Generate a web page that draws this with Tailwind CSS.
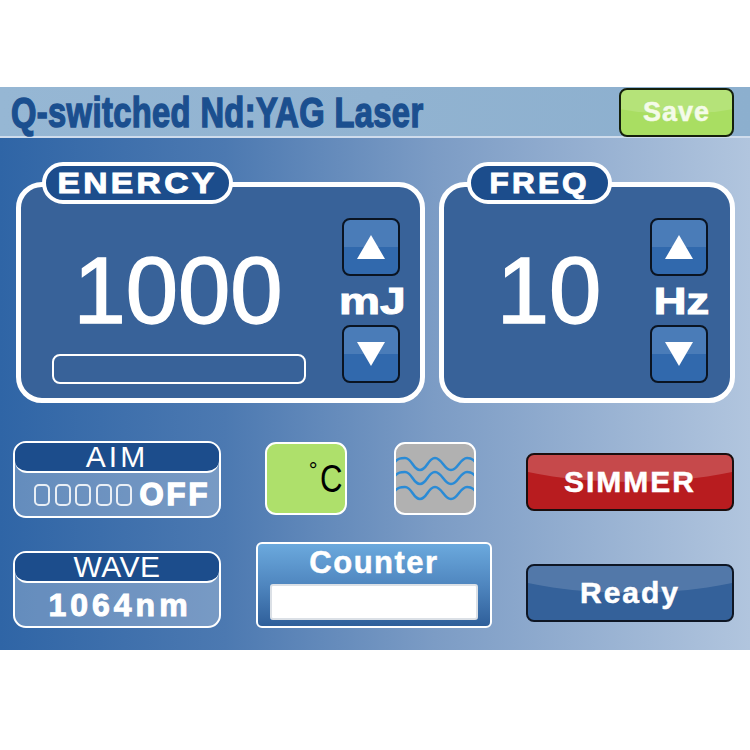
<!DOCTYPE html>
<html lang="en">
<head>
<meta charset="UTF-8">
<title>Q-switched Nd:YAG Laser</title>
<script src="https://cdn.jsdelivr.net/npm/@tailwindcss/browser@4"></script>
</head>
<body class="bg-white font-['Liberation_Sans',Arial,sans-serif] text-white">
<div class="w-[750px] h-[750px] pt-[87px] overflow-hidden">
  <div class="h-[563px] bg-[linear-gradient(to_right,#2f65a6_0%,#4c79b1_30%,#7c9cc5_58%,#b1c5de_100%)]">

    <!-- header -->
    <div class="h-[51px] flex justify-between items-start pl-[11px] pr-[16px] border-b-2 border-[#cfdcec] bg-[linear-gradient(to_right,#96b7d4,#8cafce)]">
      <h1 class="w-[412px] mt-[2px] text-[43px] leading-[46px] font-bold tracking-[0.5px] whitespace-nowrap text-[#1b4f8f] origin-left scale-x-[0.76] [-webkit-text-stroke:1.5px_#1b4f8f]">Q-switched Nd:YAG Laser</h1>
      <button class="relative w-[115px] h-[49px] mt-[1px] flex items-center justify-center overflow-hidden rounded-lg border-2 border-[#15200c] bg-[#a9de62] text-[27px] leading-none font-bold tracking-[1px] text-[#f4fbe9] [-webkit-text-stroke:0.5px_#f4fbe9]">
        <span class="absolute -left-[100px] -right-[100px] -top-[122px] h-[146px] rounded-[50%] bg-white/15"></span>
        <span class="relative">Save</span>
      </button>
    </div>

    <!-- energy / freq -->
    <div class="flex gap-[14px] pl-[16px] pt-[44px]">
      <section class="relative w-[409px] h-[221px] flex rounded-[26px] border-[5px] border-white bg-[#386299]">
        <div class="absolute left-[21px] top-[-25px] w-[191px] h-[42px] flex items-center justify-center rounded-full border-4 border-white bg-[#1c4d8c] text-[30px] leading-none font-bold">
          <span class="tracking-[3px] scale-x-[1.12] [-webkit-text-stroke:1px_#fff]">ENERCY</span>
        </div>
        <div class="ml-[31px] w-[254px]">
          <div class="mt-[56px] pr-[2px] text-center text-[94px] leading-[95px] [-webkit-text-stroke:1.5px_#fff]">1000</div>
          <div class="mt-[16px] h-[30px] rounded-lg border-2 border-white"></div>
        </div>
        <div class="ml-[36px] w-[58px] pt-[31px] flex flex-col items-center">
          <button class="w-[58px] h-[58px] flex items-center justify-center rounded-lg border-2 border-[#0a1422] bg-[linear-gradient(#4a7cb8_0%,#4a7cb8_50%,#3169ad_50%,#3169ad_100%)]">
            <svg width="28" height="24" viewBox="0 0 28 24"><path d="M14 0 L28 24 L0 24 Z" fill="#fff"/></svg>
          </button>
          <div class="h-[49px] pt-[2px] pl-[2px] flex items-center justify-center text-[36px] leading-none font-bold whitespace-nowrap scale-x-[1.28] [-webkit-text-stroke:1px_#fff]">mJ</div>
          <button class="w-[58px] h-[58px] flex items-center justify-center rounded-lg border-2 border-[#0a1422] bg-[linear-gradient(#4a7cb8_0%,#4a7cb8_50%,#3169ad_50%,#3169ad_100%)]">
            <svg width="28" height="24" viewBox="0 0 28 24"><path d="M0 0 L28 0 L14 24 Z" fill="#fff"/></svg>
          </button>
        </div>
      </section>

      <section class="relative w-[296px] h-[221px] flex rounded-[26px] border-[5px] border-white bg-[#386299]">
        <div class="absolute left-[23px] top-[-25px] w-[145px] h-[42px] flex items-center justify-center rounded-full border-4 border-white bg-[#1c4d8c] text-[30px] leading-none font-bold">
          <span class="tracking-[3px] scale-x-[1.05] [-webkit-text-stroke:1px_#fff]">FREQ</span>
        </div>
        <div class="w-[206px]">
          <div class="mt-[56px] text-center text-[94px] leading-[95px] pl-[4px] [-webkit-text-stroke:1.5px_#fff]">10</div>
        </div>
        <div class="w-[58px] pt-[31px] flex flex-col items-center">
          <button class="w-[58px] h-[58px] flex items-center justify-center rounded-lg border-2 border-[#0a1422] bg-[linear-gradient(#4a7cb8_0%,#4a7cb8_50%,#3169ad_50%,#3169ad_100%)]">
            <svg width="28" height="24" viewBox="0 0 28 24"><path d="M14 0 L28 24 L0 24 Z" fill="#fff"/></svg>
          </button>
          <div class="h-[49px] pt-[2px] pl-[3px] flex items-center justify-center text-[36px] leading-none font-bold whitespace-nowrap scale-x-[1.26] [-webkit-text-stroke:1px_#fff]">Hz</div>
          <button class="w-[58px] h-[58px] flex items-center justify-center rounded-lg border-2 border-[#0a1422] bg-[linear-gradient(#4a7cb8_0%,#4a7cb8_50%,#3169ad_50%,#3169ad_100%)]">
            <svg width="28" height="24" viewBox="0 0 28 24"><path d="M0 0 L28 0 L14 24 Z" fill="#fff"/></svg>
          </button>
        </div>
      </section>
    </div>

    <!-- lower controls -->
    <div class="flex pt-[38px] pl-[13px]">
      <div class="w-[208px] flex flex-col gap-[33px]">
        <div class="h-[77px] flex flex-col rounded-[13px] border-2 border-white bg-white/25 overflow-hidden">
          <div class="h-[28px] shrink-0 flex items-center justify-center rounded-b-[12px] bg-[#1c4d8c] border-b-2 border-white text-[30px] leading-none tracking-[3px] box-content">AIM</div>
          <div class="flex-1 flex items-center pl-[19px] gap-[4.5px]">
            <span class="w-[16px] h-[22px] rounded-[5px] border-2 border-white/85"></span>
            <span class="w-[16px] h-[22px] rounded-[5px] border-2 border-white/85"></span>
            <span class="w-[16px] h-[22px] rounded-[5px] border-2 border-white/85"></span>
            <span class="w-[16px] h-[22px] rounded-[5px] border-2 border-white/85"></span>
            <span class="w-[16px] h-[22px] rounded-[5px] border-2 border-white/85"></span>
            <span class="ml-[3px] text-[31px] leading-none font-bold tracking-[3px] [-webkit-text-stroke:1.5px_#fff]">OFF</span>
          </div>
        </div>
        <div class="h-[77px] flex flex-col rounded-[13px] border-2 border-white bg-white/25 overflow-hidden">
          <div class="h-[28px] shrink-0 flex items-center justify-center rounded-b-[12px] bg-[#1c4d8c] border-b-2 border-white text-[30px] leading-none tracking-[0.5px] box-content">WAVE</div>
          <div class="flex-1 pl-[6px] flex items-center justify-center text-[32px] leading-none font-bold tracking-[4px] [-webkit-text-stroke:1px_#fff]">1064nm</div>
        </div>
      </div>

      <div class="ml-[35px] w-[236px] pt-[1px]">
        <div class="flex gap-[47px] pl-[9px]">
          <div class="w-[82px] h-[73px] flex justify-end items-center pr-[3px] rounded-[11px] border-2 border-white bg-[#aee06b] text-black text-[38px] leading-none">
            <span class="self-start mt-[16px] -mr-[3px] text-[22px] leading-none">°</span><span class="origin-right scale-x-[0.82]">C</span>
          </div>
          <div class="w-[82px] h-[73px] rounded-[11px] border-2 border-white bg-[#b1b1b1] overflow-hidden">
            <svg class="-m-[2px]" width="82" height="73" viewBox="0 0 82 73" fill="none" stroke="#2a8bd6" stroke-width="2.5">
              <path d="M0 21 C4 16 7 16 11 16 C18 16 19 28 26 28 C33 28 34 16 41 16 C48 16 50 28 57 28 C64 28 66 16 73 16 C77 16 80 18 82 21"/>
              <path d="M0 35 C4 30 7 30 11 30 C18 30 19 42 26 42 C33 42 34 30 41 30 C48 30 50 42 57 42 C64 42 66 30 73 30 C77 30 80 32 82 35"/>
              <path d="M0 50 C4 45 7 45 11 45 C18 45 19 57 26 57 C33 57 34 45 41 45 C48 45 50 57 57 57 C64 57 66 45 73 45 C77 45 80 47 82 50"/>
            </svg>
          </div>
        </div>
        <div class="mt-[27px] h-[86px] flex flex-col items-center rounded-md border-2 border-white bg-[linear-gradient(#6ba9dd_0%,#4f86bf_50%,#2f5f9a_100%)]">
          <div class="h-[36px] flex items-center text-[31px] leading-none font-bold tracking-[1.5px] [-webkit-text-stroke:0.5px_#fff]">Counter</div>
          <div class="mt-[4px] w-[208px] h-[36px] rounded-[3px] bg-white border-2 border-[#dbe0e6]"></div>
        </div>
      </div>

      <div class="ml-[34px] w-[208px] pt-[12px] flex flex-col gap-[53px]">
        <button class="relative h-[58px] flex items-center justify-center overflow-hidden rounded-lg border-2 border-[#1a0e0e] bg-[#b81c1f] text-[30px] leading-none font-bold tracking-[2px] [-webkit-text-stroke:0.5px_#fff]">
          <span class="absolute -left-[100px] -right-[100px] -top-[119px] h-[146px] rounded-[50%] bg-white/20"></span>
          <span class="relative">SIMMER</span>
        </button>
        <button class="relative h-[58px] flex items-center justify-center overflow-hidden rounded-lg border-2 border-[#0e1624] bg-[#34619a] text-[30px] leading-none font-bold tracking-[2px] [-webkit-text-stroke:0.5px_#fff]">
          <span class="absolute -left-[100px] -right-[100px] -top-[119px] h-[146px] rounded-[50%] bg-white/15"></span>
          <span class="relative">Ready</span>
        </button>
      </div>
    </div>
  </div>
</div>
</body>
</html>
